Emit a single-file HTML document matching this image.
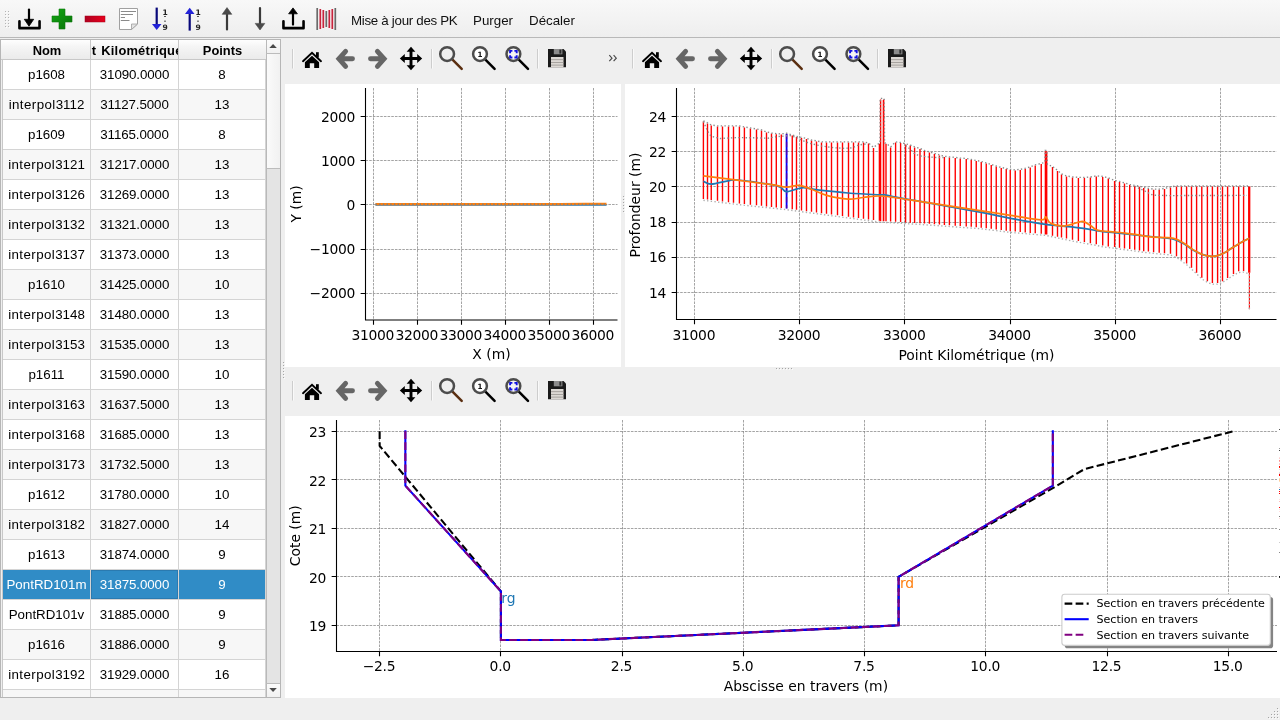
<!DOCTYPE html><html lang="fr"><head><meta charset="utf-8"><title>Profils</title><style>
html,body{margin:0;padding:0;}
body{width:1280px;height:720px;overflow:hidden;background:#efefef;position:relative;font-family:"Liberation Sans", sans-serif;font-size:13.33px;color:#000;}
.abs{position:absolute;}
#tbl,#toolbar,svg{will-change:transform;}
#toolbar{left:0;top:0;width:1280px;height:37px;background:linear-gradient(#f8f8f8,#eeeeee);border-bottom:1px solid #b8b8b8;}
#toolbar .lbl{position:absolute;top:1px;height:40px;line-height:40px;white-space:nowrap;font-size:13.33px;color:#111;}
#tbl{left:0;top:39px;width:281px;height:659px;background:#fff;border:1px solid #b6b6b6;box-sizing:border-box;overflow:hidden;}
#tbl .hdr{position:absolute;top:0;height:20px;line-height:21px;font-weight:bold;text-align:center;white-space:nowrap;overflow:hidden;background:linear-gradient(#fefefe,#f5f5f5 35%,#ebebeb);border-right:1px solid #c8c8c8;border-bottom:1px solid #c8c8c8;box-sizing:border-box;font-size:12.9px;}
#tbl .row{position:absolute;left:2px;width:264px;height:30px;}
#tbl .row.alt .c{background:#f7f7f7;}
#tbl .row.sel .c{background:#308cc6;color:#fff;}
#tbl .c{position:absolute;top:0;height:30px;line-height:29px;text-align:center;white-space:nowrap;box-sizing:border-box;border-right:1px solid #d4d4d4;border-bottom:1px solid #d4d4d4;background:#fff;font-size:13.33px;}
.mpltb{height:46px;}
.sep{position:absolute;width:1px;background:#c9c9c9;}
svg{display:block;}
svg text{font-family:"DejaVu Sans", "Liberation Sans", sans-serif;}
</style></head><body><div id="toolbar" class="abs"><svg class="abs" style="left:0;top:0" width="345" height="38" viewBox="0 0 345 38"><rect x="5.0" y="11.0" width="1" height="1" fill="#b4b4b4"/><rect x="6.0" y="12.0" width="1" height="1" fill="#fcfcfc"/><rect x="8.0" y="11.0" width="1" height="1" fill="#b4b4b4"/><rect x="9.0" y="12.0" width="1" height="1" fill="#fcfcfc"/><rect x="5.0" y="14.0" width="1" height="1" fill="#b4b4b4"/><rect x="6.0" y="15.0" width="1" height="1" fill="#fcfcfc"/><rect x="8.0" y="14.0" width="1" height="1" fill="#b4b4b4"/><rect x="9.0" y="15.0" width="1" height="1" fill="#fcfcfc"/><rect x="5.0" y="17.0" width="1" height="1" fill="#b4b4b4"/><rect x="6.0" y="18.0" width="1" height="1" fill="#fcfcfc"/><rect x="8.0" y="17.0" width="1" height="1" fill="#b4b4b4"/><rect x="9.0" y="18.0" width="1" height="1" fill="#fcfcfc"/><rect x="5.0" y="20.0" width="1" height="1" fill="#b4b4b4"/><rect x="6.0" y="21.0" width="1" height="1" fill="#fcfcfc"/><rect x="8.0" y="20.0" width="1" height="1" fill="#b4b4b4"/><rect x="9.0" y="21.0" width="1" height="1" fill="#fcfcfc"/><rect x="5.0" y="23.0" width="1" height="1" fill="#b4b4b4"/><rect x="6.0" y="24.0" width="1" height="1" fill="#fcfcfc"/><rect x="8.0" y="23.0" width="1" height="1" fill="#b4b4b4"/><rect x="9.0" y="24.0" width="1" height="1" fill="#fcfcfc"/><rect x="5.0" y="26.0" width="1" height="1" fill="#b4b4b4"/><rect x="6.0" y="27.0" width="1" height="1" fill="#fcfcfc"/><rect x="8.0" y="26.0" width="1" height="1" fill="#b4b4b4"/><rect x="9.0" y="27.0" width="1" height="1" fill="#fcfcfc"/><path d="M19.45 21.2 V28.15 H39.55 V21.2" fill="none" stroke="#000" stroke-width="2.6" stroke-linecap="round" stroke-linejoin="round"/><path d="M29 9.5 V21" fill="none" stroke="#000" stroke-width="2.2" stroke-linecap="round"/><path d="M24.3 19.3 H33.7 L29 26.2 Z" fill="#000" stroke="#000" stroke-width="0.8" stroke-linejoin="round"/><defs><linearGradient id="gg" x1="0" y1="0" x2="1" y2="1"><stop offset="0" stop-color="#12a812"/><stop offset="1" stop-color="#087008"/></linearGradient><linearGradient id="rg" x1="0" y1="0" x2="1" y2="0"><stop offset="0" stop-color="#b00020"/><stop offset="1" stop-color="#e8001c"/></linearGradient></defs><path d="M59 9 H65 V16 H72 V22 H65 V29 H59 V22 H52 V16 H59 Z" fill="url(#gg)" stroke="#0a7a0a" stroke-width="0.6"/><rect x="85" y="16" width="20" height="6" fill="url(#rg)" stroke="#a00018" stroke-width="0.5"/><path d="M119.5 8.5 H137.5 V24 L131.5 29.5 H119.5 Z" fill="#fff" stroke="#a0a0a0" stroke-width="1"/><path d="M137.5 24 H131.5 V29.5 Z" fill="#e4e4e4" stroke="#a0a0a0" stroke-width="0.8"/><path d="M120.8 11.5 H136" stroke="#8a8a8a" stroke-width="1"/><path d="M120.8 14.5 H133" stroke="#8a8a8a" stroke-width="1"/><path d="M120.8 17.5 H125" stroke="#8a8a8a" stroke-width="1"/><path d="M120.8 20.5 H129.5" stroke="#8a8a8a" stroke-width="1"/><path d="M156.7 7.6 V25" stroke="#08087a" stroke-width="2.2"/><path d="M152 24 H161.5 L156.7 30 Z" fill="#2222d8"/><text x="162.5" y="14.6" font-size="7.6" font-weight="bold" fill="#222" font-family="DejaVu Sans, sans-serif">1</text><rect x="164.1" y="16.0" width="1.8" height="0.9" fill="#333"/><rect x="164.1" y="20.7" width="1.8" height="0.9" fill="#333"/><text x="162.5" y="29.6" font-size="7.6" font-weight="bold" fill="#222" font-family="DejaVu Sans, sans-serif">9</text><path d="M189.7 13 V30.6" stroke="#08087a" stroke-width="2.2"/><path d="M185 14 H194.5 L189.7 7.8 Z" fill="#2222d8"/><text x="195.5" y="14.6" font-size="7.6" font-weight="bold" fill="#222" font-family="DejaVu Sans, sans-serif">1</text><rect x="197.1" y="16.0" width="1.8" height="0.9" fill="#333"/><rect x="197.1" y="20.7" width="1.8" height="0.9" fill="#333"/><text x="195.5" y="29.6" font-size="7.6" font-weight="bold" fill="#222" font-family="DejaVu Sans, sans-serif">9</text><path d="M227 13 V29.5" stroke="#3a3a3a" stroke-width="2.2" stroke-linecap="round"/><path d="M222.2 14.3 H231.8 L227 7.6 Z" fill="#4a4a4a" stroke="#4a4a4a" stroke-width="0.6" stroke-linejoin="round"/><path d="M260 8 V24" stroke="#3a3a3a" stroke-width="2.2" stroke-linecap="round"/><path d="M255.2 23.4 H264.8 L260 30 Z" fill="#4a4a4a" stroke="#4a4a4a" stroke-width="0.6" stroke-linejoin="round"/><path d="M283.45 21.2 V28.15 H303.55 V21.2" fill="none" stroke="#000" stroke-width="2.6" stroke-linecap="round" stroke-linejoin="round"/><path d="M293 13 V24.6" fill="none" stroke="#000" stroke-width="2.2" stroke-linecap="round"/><path d="M288.6 13.8 H297.4 L293 7.9 Z" fill="#000" stroke="#000" stroke-width="0.8" stroke-linejoin="round"/><path d="M317.2 8 V30" stroke="#6a6a6a" stroke-width="1.7"/><path d="M320.3 9 V29" stroke="#c8243c" stroke-width="1.7"/><path d="M323.3 10 V28" stroke="#c8243c" stroke-width="1.7"/><path d="M326.3 11 V27" stroke="#6a6a6a" stroke-width="1.7"/><path d="M329.3 10 V28" stroke="#c8243c" stroke-width="1.7"/><path d="M332.3 9 V29" stroke="#c8243c" stroke-width="1.7"/><path d="M335.3 8 V30" stroke="#6a6a6a" stroke-width="1.7"/></svg><div class="lbl" style="left:351px;letter-spacing:-0.3px">Mise à jour des PK</div><div class="lbl" style="left:473px">Purger</div><div class="lbl" style="left:529px">Décaler</div></div><div id="tbl" class="abs"><div class="hdr" style="left:0;width:90px;padding-left:3px">Nom</div><div class="hdr" style="left:90px;width:88px;"><span style="position:absolute;left:-27.9px;top:0;letter-spacing:0.2px;word-spacing:1.2px">Point Kilométrique</span></div><div class="hdr" style="left:178px;width:87px;border-right:none">Points</div><div class="row" style="top:20px"><div class="c" style="left:0;width:88px">p1608</div><div class="c" style="left:88px;width:88px;letter-spacing:-0.1px">31090.0000</div><div class="c" style="left:176px;width:87px">8</div></div><div class="row alt" style="top:50px"><div class="c" style="left:0;width:88px"><span style="letter-spacing:0.42px">interpol</span>3112</div><div class="c" style="left:88px;width:88px;letter-spacing:-0.1px">31127.5000</div><div class="c" style="left:176px;width:87px">13</div></div><div class="row" style="top:80px"><div class="c" style="left:0;width:88px">p1609</div><div class="c" style="left:88px;width:88px;letter-spacing:-0.1px">31165.0000</div><div class="c" style="left:176px;width:87px">8</div></div><div class="row alt" style="top:110px"><div class="c" style="left:0;width:88px"><span style="letter-spacing:0.42px">interpol</span>3121</div><div class="c" style="left:88px;width:88px;letter-spacing:-0.1px">31217.0000</div><div class="c" style="left:176px;width:87px">13</div></div><div class="row" style="top:140px"><div class="c" style="left:0;width:88px"><span style="letter-spacing:0.42px">interpol</span>3126</div><div class="c" style="left:88px;width:88px;letter-spacing:-0.1px">31269.0000</div><div class="c" style="left:176px;width:87px">13</div></div><div class="row alt" style="top:170px"><div class="c" style="left:0;width:88px"><span style="letter-spacing:0.42px">interpol</span>3132</div><div class="c" style="left:88px;width:88px;letter-spacing:-0.1px">31321.0000</div><div class="c" style="left:176px;width:87px">13</div></div><div class="row" style="top:200px"><div class="c" style="left:0;width:88px"><span style="letter-spacing:0.42px">interpol</span>3137</div><div class="c" style="left:88px;width:88px;letter-spacing:-0.1px">31373.0000</div><div class="c" style="left:176px;width:87px">13</div></div><div class="row alt" style="top:230px"><div class="c" style="left:0;width:88px">p1610</div><div class="c" style="left:88px;width:88px;letter-spacing:-0.1px">31425.0000</div><div class="c" style="left:176px;width:87px">10</div></div><div class="row" style="top:260px"><div class="c" style="left:0;width:88px"><span style="letter-spacing:0.42px">interpol</span>3148</div><div class="c" style="left:88px;width:88px;letter-spacing:-0.1px">31480.0000</div><div class="c" style="left:176px;width:87px">13</div></div><div class="row alt" style="top:290px"><div class="c" style="left:0;width:88px"><span style="letter-spacing:0.42px">interpol</span>3153</div><div class="c" style="left:88px;width:88px;letter-spacing:-0.1px">31535.0000</div><div class="c" style="left:176px;width:87px">13</div></div><div class="row" style="top:320px"><div class="c" style="left:0;width:88px">p1611</div><div class="c" style="left:88px;width:88px;letter-spacing:-0.1px">31590.0000</div><div class="c" style="left:176px;width:87px">10</div></div><div class="row alt" style="top:350px"><div class="c" style="left:0;width:88px"><span style="letter-spacing:0.42px">interpol</span>3163</div><div class="c" style="left:88px;width:88px;letter-spacing:-0.1px">31637.5000</div><div class="c" style="left:176px;width:87px">13</div></div><div class="row" style="top:380px"><div class="c" style="left:0;width:88px"><span style="letter-spacing:0.42px">interpol</span>3168</div><div class="c" style="left:88px;width:88px;letter-spacing:-0.1px">31685.0000</div><div class="c" style="left:176px;width:87px">13</div></div><div class="row alt" style="top:410px"><div class="c" style="left:0;width:88px"><span style="letter-spacing:0.42px">interpol</span>3173</div><div class="c" style="left:88px;width:88px;letter-spacing:-0.1px">31732.5000</div><div class="c" style="left:176px;width:87px">13</div></div><div class="row" style="top:440px"><div class="c" style="left:0;width:88px">p1612</div><div class="c" style="left:88px;width:88px;letter-spacing:-0.1px">31780.0000</div><div class="c" style="left:176px;width:87px">10</div></div><div class="row alt" style="top:470px"><div class="c" style="left:0;width:88px"><span style="letter-spacing:0.42px">interpol</span>3182</div><div class="c" style="left:88px;width:88px;letter-spacing:-0.1px">31827.0000</div><div class="c" style="left:176px;width:87px">14</div></div><div class="row" style="top:500px"><div class="c" style="left:0;width:88px">p1613</div><div class="c" style="left:88px;width:88px;letter-spacing:-0.1px">31874.0000</div><div class="c" style="left:176px;width:87px">9</div></div><div class="row alt sel" style="top:530px"><div class="c" style="left:0;width:88px">PontRD101m</div><div class="c" style="left:88px;width:88px;letter-spacing:-0.1px"><span style="position:absolute;left:0;top:0;width:87px;height:29px;box-sizing:border-box;border:1px solid #2a7ab0"></span>31875.0000</div><div class="c" style="left:176px;width:87px">9</div></div><div class="row" style="top:560px"><div class="c" style="left:0;width:88px">PontRD101v</div><div class="c" style="left:88px;width:88px;letter-spacing:-0.1px">31885.0000</div><div class="c" style="left:176px;width:87px">9</div></div><div class="row alt" style="top:590px"><div class="c" style="left:0;width:88px">p1616</div><div class="c" style="left:88px;width:88px;letter-spacing:-0.1px">31886.0000</div><div class="c" style="left:176px;width:87px">9</div></div><div class="row" style="top:620px"><div class="c" style="left:0;width:88px"><span style="letter-spacing:0.42px">interpol</span>3192</div><div class="c" style="left:88px;width:88px;letter-spacing:-0.1px">31929.0000</div><div class="c" style="left:176px;width:87px">16</div></div><div class="row alt" style="top:650px"><div class="c" style="left:0;width:88px"></div><div class="c" style="left:88px;width:88px;letter-spacing:-0.1px"></div><div class="c" style="left:176px;width:87px"></div></div><div class="abs" style="left:0;top:20px;width:2px;height:640px;background:#efefef;border-right:1px solid #c8c8c8;box-sizing:border-box"></div><div class="abs" style="left:265px;top:0;width:14px;height:657px;background:#e4e4e4;border-left:1px solid #b9b9b9;box-sizing:border-box"></div><div class="abs" style="left:265px;top:0;width:14px;height:14px;background:linear-gradient(#fbfbfb,#f1f1f1);border-left:1px solid #b9b9b9;border-bottom:1px solid #bcbcbc;box-sizing:border-box"></div><svg class="abs" style="left:265px;top:0" width="14" height="14"><path d="M3.3 8.0 H10.8 L7.05 4.1 Z" fill="#4a4a4a"/></svg><div class="abs" style="left:265px;top:14px;width:14px;height:115px;background:linear-gradient(90deg,#fafafa,#f1f1f1);border-left:1px solid #b9b9b9;border-bottom:1px solid #bcbcbc;box-sizing:border-box"></div><div class="abs" style="left:265px;top:643px;width:14px;height:14px;background:linear-gradient(#fbfbfb,#f1f1f1);border-left:1px solid #b9b9b9;border-top:1px solid #bcbcbc;box-sizing:border-box"></div><svg class="abs" style="left:265px;top:643px" width="14" height="14"><path d="M3.3 5.1 H10.8 L7.05 9.0 Z" fill="#4a4a4a"/></svg></div><svg class="abs" style="left:284px;top:38px" width="340" height="46" viewBox="0 0 340 46"><rect x="8.0" y="11" width="1" height="19.5" fill="#cdcdcd"/><rect x="9.0" y="11" width="1" height="19.5" fill="#f9f9f9"/><rect x="147.0" y="11" width="1" height="19.5" fill="#cdcdcd"/><rect x="148.0" y="11" width="1" height="19.5" fill="#f9f9f9"/><rect x="253.0" y="11" width="1" height="19.5" fill="#cdcdcd"/><rect x="254.0" y="11" width="1" height="19.5" fill="#f9f9f9"/><path d="M19 23.2 L28 14.8 L37 23.2" fill="none" stroke="#000" stroke-width="1.9" stroke-linecap="round" stroke-linejoin="miter"/><rect x="32" y="14.2" width="2.8" height="5.4" fill="#000"/><path d="M20.9 24.2 L28 17.8 L35.1 24.2 V30 H30.2 V25.2 H25.8 V30 H20.9 Z" fill="#000"/><path d="M61.6 13.4 L54.9 20.8 L61.6 28.3 M56 20.8 H68.5" fill="none" stroke="#666" stroke-width="4.9" stroke-linecap="round" stroke-linejoin="miter"/><path d="M93.4 13.4 L100.1 20.8 L93.4 28.3 M99 20.8 H86.5" fill="none" stroke="#666" stroke-width="4.9" stroke-linecap="round" stroke-linejoin="miter"/><path d="M119 20.5 H135 M127 12 V29" stroke="#000" stroke-width="2.9" fill="none"/><path d="M115.8 20.5 L120.8 16.1 V24.9 Z M138.2 20.5 L133.2 16.1 V24.9 Z M127 8.8 L122.6 13.8 H131.4 Z M127 32.2 L122.6 27.2 H131.4 Z" fill="#000"/><path d="M168.5 21.6 L177.7 30.8" stroke="#5a2e10" stroke-width="2.5" stroke-linecap="round"/><circle cx="163.1" cy="16.1" r="6.9" fill="none" stroke="#4c4c4c" stroke-width="2.5"/><path d="M201.4 21.6 L210.6 30.8" stroke="#000" stroke-width="2.5" stroke-linecap="round"/><circle cx="196.0" cy="16.1" r="6.9" fill="#ffffff" stroke="#4c4c4c" stroke-width="2.5"/><text x="196.0" y="18.7" font-size="7.2" font-weight="bold" text-anchor="middle" fill="#111">1</text><path d="M234.8 21.6 L244.0 30.8" stroke="#000" stroke-width="2.5" stroke-linecap="round"/><circle cx="229.4" cy="16.1" r="6.9" fill="#f4f4f4" stroke="#4c4c4c" stroke-width="2.5"/><path d="M226.1 15.2 V12.9 H228.4 M230.4 12.9 H232.70000000000002 V15.2 M232.70000000000002 17.2 V19.5 H230.4 M228.4 19.5 H226.1 V17.2" fill="none" stroke="#1010e0" stroke-width="1.9"/><path d="M264 11 H279.5 L282 13.5 V29.3 H264 Z" fill="#1a1a1a"/><rect x="269.8" y="11" width="8.6" height="5.3" fill="#8c8c8c"/><rect x="275.4" y="11.6" width="1.9" height="4" fill="#2a2a2a"/><rect x="267" y="19" width="12.5" height="10.3" fill="#dcd8d4"/><rect x="267" y="21.3" width="12.5" height="0.8" fill="#9a9692"/><rect x="267" y="24" width="12.5" height="0.8" fill="#9a9692"/><rect x="267" y="26.7" width="12.5" height="0.8" fill="#9a9692"/><path d="M325.3 17.2 L328 20.2 L325.3 23.2 M329.6 17.2 L332.3 20.2 L329.6 23.2" fill="none" stroke="#484848" stroke-width="1.15"/></svg><svg class="abs" style="left:624px;top:38px" width="340" height="46" viewBox="0 0 340 46"><rect x="8.0" y="11" width="1" height="19.5" fill="#cdcdcd"/><rect x="9.0" y="11" width="1" height="19.5" fill="#f9f9f9"/><rect x="147.0" y="11" width="1" height="19.5" fill="#cdcdcd"/><rect x="148.0" y="11" width="1" height="19.5" fill="#f9f9f9"/><rect x="253.0" y="11" width="1" height="19.5" fill="#cdcdcd"/><rect x="254.0" y="11" width="1" height="19.5" fill="#f9f9f9"/><path d="M19 23.2 L28 14.8 L37 23.2" fill="none" stroke="#000" stroke-width="1.9" stroke-linecap="round" stroke-linejoin="miter"/><rect x="32" y="14.2" width="2.8" height="5.4" fill="#000"/><path d="M20.9 24.2 L28 17.8 L35.1 24.2 V30 H30.2 V25.2 H25.8 V30 H20.9 Z" fill="#000"/><path d="M61.6 13.4 L54.9 20.8 L61.6 28.3 M56 20.8 H68.5" fill="none" stroke="#666" stroke-width="4.9" stroke-linecap="round" stroke-linejoin="miter"/><path d="M93.4 13.4 L100.1 20.8 L93.4 28.3 M99 20.8 H86.5" fill="none" stroke="#666" stroke-width="4.9" stroke-linecap="round" stroke-linejoin="miter"/><path d="M119 20.5 H135 M127 12 V29" stroke="#000" stroke-width="2.9" fill="none"/><path d="M115.8 20.5 L120.8 16.1 V24.9 Z M138.2 20.5 L133.2 16.1 V24.9 Z M127 8.8 L122.6 13.8 H131.4 Z M127 32.2 L122.6 27.2 H131.4 Z" fill="#000"/><path d="M168.5 21.6 L177.7 30.8" stroke="#5a2e10" stroke-width="2.5" stroke-linecap="round"/><circle cx="163.1" cy="16.1" r="6.9" fill="none" stroke="#4c4c4c" stroke-width="2.5"/><path d="M201.4 21.6 L210.6 30.8" stroke="#000" stroke-width="2.5" stroke-linecap="round"/><circle cx="196.0" cy="16.1" r="6.9" fill="#ffffff" stroke="#4c4c4c" stroke-width="2.5"/><text x="196.0" y="18.7" font-size="7.2" font-weight="bold" text-anchor="middle" fill="#111">1</text><path d="M234.8 21.6 L244.0 30.8" stroke="#000" stroke-width="2.5" stroke-linecap="round"/><circle cx="229.4" cy="16.1" r="6.9" fill="#f4f4f4" stroke="#4c4c4c" stroke-width="2.5"/><path d="M226.1 15.2 V12.9 H228.4 M230.4 12.9 H232.70000000000002 V15.2 M232.70000000000002 17.2 V19.5 H230.4 M228.4 19.5 H226.1 V17.2" fill="none" stroke="#1010e0" stroke-width="1.9"/><path d="M264 11 H279.5 L282 13.5 V29.3 H264 Z" fill="#1a1a1a"/><rect x="269.8" y="11" width="8.6" height="5.3" fill="#8c8c8c"/><rect x="275.4" y="11.6" width="1.9" height="4" fill="#2a2a2a"/><rect x="267" y="19" width="12.5" height="10.3" fill="#dcd8d4"/><rect x="267" y="21.3" width="12.5" height="0.8" fill="#9a9692"/><rect x="267" y="24" width="12.5" height="0.8" fill="#9a9692"/><rect x="267" y="26.7" width="12.5" height="0.8" fill="#9a9692"/></svg><svg class="abs" style="left:284px;top:369.5px" width="340" height="46" viewBox="0 0 340 46"><rect x="8.0" y="11" width="1" height="19.5" fill="#cdcdcd"/><rect x="9.0" y="11" width="1" height="19.5" fill="#f9f9f9"/><rect x="147.0" y="11" width="1" height="19.5" fill="#cdcdcd"/><rect x="148.0" y="11" width="1" height="19.5" fill="#f9f9f9"/><rect x="253.0" y="11" width="1" height="19.5" fill="#cdcdcd"/><rect x="254.0" y="11" width="1" height="19.5" fill="#f9f9f9"/><path d="M19 23.2 L28 14.8 L37 23.2" fill="none" stroke="#000" stroke-width="1.9" stroke-linecap="round" stroke-linejoin="miter"/><rect x="32" y="14.2" width="2.8" height="5.4" fill="#000"/><path d="M20.9 24.2 L28 17.8 L35.1 24.2 V30 H30.2 V25.2 H25.8 V30 H20.9 Z" fill="#000"/><path d="M61.6 13.4 L54.9 20.8 L61.6 28.3 M56 20.8 H68.5" fill="none" stroke="#666" stroke-width="4.9" stroke-linecap="round" stroke-linejoin="miter"/><path d="M93.4 13.4 L100.1 20.8 L93.4 28.3 M99 20.8 H86.5" fill="none" stroke="#666" stroke-width="4.9" stroke-linecap="round" stroke-linejoin="miter"/><path d="M119 20.5 H135 M127 12 V29" stroke="#000" stroke-width="2.9" fill="none"/><path d="M115.8 20.5 L120.8 16.1 V24.9 Z M138.2 20.5 L133.2 16.1 V24.9 Z M127 8.8 L122.6 13.8 H131.4 Z M127 32.2 L122.6 27.2 H131.4 Z" fill="#000"/><path d="M168.5 21.6 L177.7 30.8" stroke="#5a2e10" stroke-width="2.5" stroke-linecap="round"/><circle cx="163.1" cy="16.1" r="6.9" fill="none" stroke="#4c4c4c" stroke-width="2.5"/><path d="M201.4 21.6 L210.6 30.8" stroke="#000" stroke-width="2.5" stroke-linecap="round"/><circle cx="196.0" cy="16.1" r="6.9" fill="#ffffff" stroke="#4c4c4c" stroke-width="2.5"/><text x="196.0" y="18.7" font-size="7.2" font-weight="bold" text-anchor="middle" fill="#111">1</text><path d="M234.8 21.6 L244.0 30.8" stroke="#000" stroke-width="2.5" stroke-linecap="round"/><circle cx="229.4" cy="16.1" r="6.9" fill="#f4f4f4" stroke="#4c4c4c" stroke-width="2.5"/><path d="M226.1 15.2 V12.9 H228.4 M230.4 12.9 H232.70000000000002 V15.2 M232.70000000000002 17.2 V19.5 H230.4 M228.4 19.5 H226.1 V17.2" fill="none" stroke="#1010e0" stroke-width="1.9"/><path d="M264 11 H279.5 L282 13.5 V29.3 H264 Z" fill="#1a1a1a"/><rect x="269.8" y="11" width="8.6" height="5.3" fill="#8c8c8c"/><rect x="275.4" y="11.6" width="1.9" height="4" fill="#2a2a2a"/><rect x="267" y="19" width="12.5" height="10.3" fill="#dcd8d4"/><rect x="267" y="21.3" width="12.5" height="0.8" fill="#9a9692"/><rect x="267" y="24" width="12.5" height="0.8" fill="#9a9692"/><rect x="267" y="26.7" width="12.5" height="0.8" fill="#9a9692"/></svg><svg class="abs" style="left:285px;top:84px;background:#fff" width="336" height="283" viewBox="285 84 336 283"><path d="M373.5 88 V320 M417.5 88 V320 M461.5 88 V320 M505.5 88 V320 M549.5 88 V320 M593.5 88 V320 M365.5 116.5 H617.5 M365.5 160.5 H617.5 M365.5 204.5 H617.5 M365.5 249.5 H617.5 M365.5 293.5 H617.5 " stroke="#808080" stroke-width="0.72" stroke-dasharray="2.57 1.11" fill="none"/><path d="M375.5 204.9 H606.5" stroke="#1f77b4" stroke-width="1.7" fill="none"/><path d="M375.5 204.8 H606.5" stroke="#8a8a8a" stroke-width="0.9" fill="none"/><path d="M375.5 204.1 L560 204.1 L585 203.8 L606.5 203.8" stroke="#ff7f0e" stroke-width="2.08" fill="none"/><path d="M375.5 204.2 H606.5" stroke="#808080" stroke-width="1.39" stroke-dasharray="1.39 2.29" fill="none"/><path d="M365.5 88 V320 M364.95 320 H617.5 M373.5 320 v4.86 M417.5 320 v4.86 M461.5 320 v4.86 M505.5 320 v4.86 M549.5 320 v4.86 M593.5 320 v4.86 M365.5 116.5 h-4.86 M365.5 160.5 h-4.86 M365.5 204.5 h-4.86 M365.5 249.5 h-4.86 M365.5 293.5 h-4.86 " stroke="#000" stroke-width="1.1" fill="none"/><text x="372.7" y="339.6" font-size="13.89" text-anchor="middle" letter-spacing="-0.3">31000</text><text x="416.7" y="339.6" font-size="13.89" text-anchor="middle" letter-spacing="-0.3">32000</text><text x="460.7" y="339.6" font-size="13.89" text-anchor="middle" letter-spacing="-0.3">33000</text><text x="504.7" y="339.6" font-size="13.89" text-anchor="middle" letter-spacing="-0.3">34000</text><text x="548.7" y="339.6" font-size="13.89" text-anchor="middle" letter-spacing="-0.3">35000</text><text x="592.7" y="339.6" font-size="13.89" text-anchor="middle" letter-spacing="-0.3">36000</text><text x="355" y="121.6" font-size="13.89" text-anchor="end" letter-spacing="-0.3">2000</text><text x="355" y="165.5" font-size="13.89" text-anchor="end" letter-spacing="-0.3">1000</text><text x="355" y="209.5" font-size="13.89" text-anchor="end" letter-spacing="-0.3">0</text><text x="355" y="254.2" font-size="13.89" text-anchor="end" letter-spacing="-0.3">−1000</text><text x="355" y="298.3" font-size="13.89" text-anchor="end" letter-spacing="-0.3">−2000</text><text x="491.5" y="358.8" font-size="13.89" text-anchor="middle">X (m)</text><text transform="translate(300.5 204) rotate(-90)" font-size="13.89" text-anchor="middle">Y (m)</text></svg><svg class="abs" style="left:625px;top:84px;background:#fff" width="655" height="283" viewBox="625 84 655 283"><path d="M694.5 88 V319.5 M799.5 88 V319.5 M904.5 88 V319.5 M1010.5 88 V319.5 M1115.5 88 V319.5 M1220.5 88 V319.5 M676.5 116.5 H1276.5 M676.5 151.5 H1276.5 M676.5 186.5 H1276.5 M676.5 222.5 H1276.5 M676.5 257.5 H1276.5 M676.5 292.5 H1276.5 " stroke="#808080" stroke-width="0.72" stroke-dasharray="2.57 1.11" fill="none"/><path d="M703.4 121.5 V199.1 M707.5 123.4 V199.6 M711.25 125.6 V200.06 M717.5 126.5 V200.82 M722.5 126.5 V201.44 M728.5 126.5 V202.17 M733.5 126.5 V202.78 M739.4 126.5 V203.5 M744.4 127.5 V204.06 M750.4 128.5 V204.69 M756.5 129.6 V205.33 M761.5 130.5 V205.86 M766.5 132.5 V206.38 M771.5 133.6 V206.91 M776.3 134.2 V207.42 M781.3 134.5 V207.94 M792.25 135.6 V209.26 M796.5 137 V209.83 M801.5 138 V210.5 M806.5 139 V211.17 M811.5 140.6 V211.84 M816.5 141.5 V212.51 M821.5 142.5 V213.18 M826.5 142.5 V213.85 M831.5 142.5 V214.53 M837.5 142.5 V215.33 M842.5 142.5 V215.99 M848.5 142.5 V216.79 M853.5 142.5 V217.46 M858.5 142.5 V218.12 M863.5 142.5 V218.79 M868.5 143.5 V219.45 M873.5 148 V220.12 M879.4 143.75 V220.85 M886 143.75 V221.24 M890.6 147.5 V221.51 M895.6 142.5 V221.8 M900.6 143.1 V222.1 M905.6 144.4 V222.39 M910.25 145.6 V222.67 M914.6 147.5 V222.92 M920 149 V223.24 M924.4 151 V223.5 M929.4 152.5 V223.86 M934.4 154 V224.22 M939.4 155.5 V224.58 M944.4 156.9 V224.94 M949.4 157.5 V225.3 M955.25 158.03 V225.72 M960.25 158.71 V226.08 M966.25 159.05 V226.51 M971.25 160.05 V226.87 M976.25 161.05 V227.23 M981.25 162.07 V227.65 M986.25 163.57 V228.26 M991.25 165.07 V228.86 M996.25 166.57 V229.46 M1001.25 168.05 V230.07 M1006.25 169.06 V230.67 M1010.25 170.03 V231.16 M1015.25 170.47 V231.6 M1020.25 169.95 V232.02 M1025.25 168.93 V232.45 M1030.25 167.4 V232.88 M1035.25 165.44 V233.31 M1041.25 164 V233.82 M1052.5 167 V235.64 M1057.5 171 V236.7 M1061.5 174.5 V237.54 M1066.5 176.5 V238.6 M1072.5 177.5 V239.85 M1078.4 178 V240.95 M1084.4 178 V242.08 M1090.4 177.6 V243.2 M1096.3 176.5 V244.2 M1102.7 177 V245.6 M1108.3 178.5 V246.4 M1114.6 181 V247 M1119.5 182 V247.8 M1124.5 183.5 V248.5 M1129.7 185 V249.1 M1134.7 186 V249.8 M1139.5 186.7 V250.5 M1143.7 188 V251.2 M1148.4 189 V251.6 M1153.6 189.7 V252.2 M1159.2 189.7 V252.8 M1164.5 189 V253.2 M1170.5 187.5 V253.8 M1176.5 186.5 V256.3 M1181.4 186.5 V259.7 M1186.6 186.5 V263.6 M1191.5 186.5 V267.8 M1196.6 186.5 V272.7 M1201.8 186.5 V277.7 M1207.4 186.5 V281.2 M1212.4 186.5 V283 M1217.6 186.5 V282.9 M1222.5 186.5 V281.2 M1227.6 186.5 V277.9 M1233.5 186.5 V274.1 M1238.7 186.5 V271.3 M1243.6 186.5 V270.9 M880.6 99.4 V221.2 M883.7 99.4 V221.2 M1045.4 151.3 V234.4 M1046.7 151.3 V234.4 " stroke="#ff0000" stroke-width="1.39" fill="none"/><path d="M882.15 100 V221" stroke="#ffb4b4" stroke-width="1.6" fill="none"/><path d="M1249.2 186.5 V272.7" stroke="#ff0000" stroke-width="2.3" fill="none"/><path d="M1249.4 272.7 V309.3" stroke="#ff0000" stroke-width="1.1" fill="none"/><path d="M786.6 133.8 V208.5" stroke="#0000ff" stroke-width="1.8" fill="none"/><path d="M786.6 133.8 V208.5" stroke="#800080" stroke-width="1.5" stroke-dasharray="5.5 2.4" fill="none" opacity="0.55"/><path d="M703.4 120.9 L707.5 122.8 L711.25 125 L717.5 125.9 L739.4 125.9 L744.4 126.9 L750.4 127.9 L756.5 129 L761.5 129.9 L766.5 131.9 L771.5 133 L776.3 133.6 L781.3 133.9 L786.6 133.2 L792.25 135 L796.5 136.4 L801.5 137.4 L806.5 138.4 L811.5 140 L816.5 140.9 L821.5 141.9 L863.5 141.9 L868.5 142.9 L873.5 147.4 L879.4 143.15 L880 142.9 L880.2 98.4 L884.2 98.4 L884.6 142.9 L886 143.15 L890.6 146.9 L895.6 141.9 L900.6 142.5 L905.6 143.8 L910.25 145 L914.6 146.9 L920 148.4 L924.4 150.4 L929.4 151.9 L934.4 153.4 L939.4 154.9 L944.4 156.3 L949.4 156.9 L955 157.4 L960 158.1 L966 158.4 L971 159.4 L976 160.4 L981 161.4 L986 162.9 L991 164.4 L996 165.9 L1001 167.4 L1006 168.4 L1010 169.4 L1015 169.9 L1020 169.4 L1025 168.4 L1030 166.9 L1035 164.9 L1041.25 163.4 L1044.8 162.4 L1045.2 150.4 L1046.9 150.4 L1047.4 164.4 L1052.5 166.4 L1057.5 170.4 L1061.5 173.9 L1066.5 175.9 L1072.5 176.9 L1078.4 177.4 L1084.4 177.4 L1090.4 177 L1096.3 175.9 L1102.7 176.4 L1108.3 177.9 L1114.6 180.4 L1119.5 181.4 L1124.5 182.9 L1129.7 184.4 L1134.7 185.4 L1139.5 186.1 L1143.7 187.4 L1148.4 188.4 L1153.6 189.1 L1159.2 189.1 L1164.5 188.4 L1170.5 186.9 L1176.5 185.9 L1249.2 185.9" stroke="#8c8c8c" stroke-width="1.39" stroke-dasharray="1.39 2.29" fill="none"/><path d="M703.4 121.5 L707 130 L711 136.2 L720 138.5 L737 137.6 L753 137.8 L768 138.2 L778 136.5 L790 135.6 L796.5 137.5 L801.5 140 L808.75 143.1 L821 145.9 L833.75 147.75 L845 148.4 L852.5 147.75 L858.75 145 L867.5 143.75" stroke="#8c8c8c" stroke-width="1.39" stroke-dasharray="1.39 2.29" fill="none"/><path d="M1134.7 186.2 L1143.7 190.5 L1153 195.2 L1170 195.6 L1247 195.4" stroke="#8c8c8c" stroke-width="1.39" stroke-dasharray="1.39 2.29" fill="none"/><path d="M905.6 145.5 L910 149 L913.75 153.1 L917.5 155 L921 156 L927.5 156.9 L936 157.5 L944.4 157.5" stroke="#8c8c8c" stroke-width="1.39" stroke-dasharray="1.39 2.29" fill="none"/><path d="M703.4 200.3 L741 204.9 L786.6 209.7 L832.8 215.9 L878.6 222 L924.4 224.7 L980 228.7 L1010.6 232.4 L1045.7 235.4 L1071.7 240.9 L1090.4 244.4 L1096.3 245.4 L1102.7 246.8 L1108.3 247.6 L1114.6 248.2 L1119.5 249 L1124.5 249.7 L1129.7 250.3 L1134.7 251 L1139.5 251.7 L1143.7 252.4 L1148.4 252.8 L1153.6 253.4 L1159.2 254 L1164.5 254.4 L1170.5 255 L1176.5 257.5 L1181.4 260.9 L1186.6 264.8 L1191.5 269 L1196.6 273.9 L1201.8 278.9 L1207.4 282.4 L1212.4 284.2 L1217.6 284.1 L1222.5 282.4 L1227.6 279.1 L1233.5 275.3 L1238.7 272.5 L1243.6 272.1 L1249.2 273.9 L1249.4 309.5" stroke="#b0b0b0" stroke-width="1.39" stroke-dasharray="1.39 2.29" fill="none"/><path d="M703.4 181.2 C704.72 181.7 707.2 184.27 711.3 184.2 C715.4 184.13 723.72 181.5 728 180.8 C732.28 180.1 729.72 179.35 737 180 C744.28 180.65 764.37 183.45 771.7 184.7 C779.03 185.95 778.52 186.33 781 187.5 C783.48 188.67 783.07 191.65 786.6 191.7 C790.13 191.75 797.05 188.1 802.2 187.8 C807.35 187.5 809.87 189.03 817.5 189.9 C825.13 190.77 837.82 192.18 848 193 C858.18 193.82 872.48 194.5 878.6 194.8 C884.72 195.1 882.13 194.45 884.7 194.8 C887.27 195.15 887.38 195.68 894 196.9 C900.62 198.12 910.07 199.55 924.4 202.1 C938.73 204.65 965.63 209.5 980 212.2 C994.37 214.9 999.65 216.27 1010.6 218.3 C1021.55 220.33 1035.52 222.97 1045.7 224.4 C1055.88 225.83 1064.25 226.05 1071.7 226.9 C1079.15 227.75 1085.23 228.72 1090.4 229.5 C1095.57 230.28 1098.67 231.08 1102.7 231.6 C1106.73 232.12 1109.27 232.07 1114.6 232.6 C1119.93 233.13 1126.38 233.9 1134.7 234.8 C1143.02 235.7 1158.53 237.38 1164.5 238 C1170.47 238.62 1168.5 238.13 1170.5 238.5 C1172.5 238.87 1174.68 239.52 1176.5 240.2 C1178.32 240.88 1179.72 241.7 1181.4 242.6 C1183.08 243.5 1184.92 244.53 1186.6 245.6 C1188.28 246.67 1189.83 247.95 1191.5 249 C1193.17 250.05 1194.88 251 1196.6 251.9 C1198.32 252.8 1200 253.73 1201.8 254.4 C1203.6 255.07 1205.63 255.58 1207.4 255.9 C1209.17 256.22 1210.7 256.35 1212.4 256.3 C1214.1 256.25 1215.92 256.02 1217.6 255.6 C1219.28 255.18 1220.83 254.58 1222.5 253.8 C1224.17 253.02 1225.77 252.03 1227.6 250.9 C1229.43 249.77 1231.65 248.17 1233.5 247 C1235.35 245.83 1237.02 244.88 1238.7 243.9 C1240.38 242.92 1241.85 242.03 1243.6 241.1 C1245.35 240.17 1248.27 238.77 1249.2 238.3" stroke="#1f77b4" stroke-width="1.7" fill="none" stroke-linejoin="round"/><path d="M703.4 175.8 C709.67 176.62 729.62 179.22 741 180.7 C752.38 182.18 764.1 183.62 771.7 184.7 C779.3 185.78 782.05 187.1 786.6 187.2 C791.15 187.3 794.87 184.95 799 185.3 C803.13 185.65 806.78 187.62 811.4 189.3 C816.02 190.98 820.6 193.77 826.7 195.4 C832.8 197.03 841.9 198.75 848 199.1 C854.1 199.45 858.2 198.02 863.3 197.5 C868.4 196.98 873.48 196 878.6 196 C883.72 196 886.37 196.48 894 197.5 C901.63 198.52 910.07 199.9 924.4 202.1 C938.73 204.3 965.63 208.5 980 210.7 C994.37 212.9 1000.43 213.77 1010.6 215.3 C1020.77 216.83 1035.15 219.65 1041 219.9 C1046.85 220.15 1044.15 216.3 1045.7 216.8 C1047.25 217.3 1047.5 221.37 1050.3 222.9 C1053.1 224.43 1058.93 225.75 1062.5 226 C1066.07 226.25 1068.38 225.17 1071.7 224.4 C1075.02 223.63 1079.28 221.2 1082.4 221.4 C1085.52 221.6 1088.08 224.2 1090.4 225.6 C1092.72 227 1094.25 228.9 1096.3 229.8 C1098.35 230.7 1099.65 230.63 1102.7 231 C1105.75 231.37 1110.97 231.67 1114.6 232 C1118.23 232.33 1121.15 232.62 1124.5 233 C1127.85 233.38 1130.72 233.7 1134.7 234.3 C1138.68 234.9 1143.43 236.05 1148.4 236.6 C1153.37 237.15 1160.82 237.38 1164.5 237.6 C1168.18 237.82 1168.5 237.6 1170.5 237.9 C1172.5 238.2 1174.68 238.75 1176.5 239.4 C1178.32 240.05 1179.72 240.87 1181.4 241.8 C1183.08 242.73 1184.92 243.87 1186.6 245 C1188.28 246.13 1189.83 247.5 1191.5 248.6 C1193.17 249.7 1194.88 250.67 1196.6 251.6 C1198.32 252.53 1200 253.48 1201.8 254.2 C1203.6 254.92 1205.63 255.55 1207.4 255.9 C1209.17 256.25 1210.7 256.35 1212.4 256.3 C1214.1 256.25 1215.92 256.02 1217.6 255.6 C1219.28 255.18 1220.83 254.58 1222.5 253.8 C1224.17 253.02 1225.77 252.03 1227.6 250.9 C1229.43 249.77 1231.65 248.17 1233.5 247 C1235.35 245.83 1237.02 244.88 1238.7 243.9 C1240.38 242.92 1241.85 242.03 1243.6 241.1 C1245.35 240.17 1248.27 238.77 1249.2 238.3" stroke="#ff7f0e" stroke-width="1.7" fill="none" stroke-linejoin="round"/><path d="M676.5 88 V319.5 M675.95 319.5 H1276.5 M694.5 319.5 v4.86 M799.5 319.5 v4.86 M904.5 319.5 v4.86 M1010.5 319.5 v4.86 M1115.5 319.5 v4.86 M1220.5 319.5 v4.86 M676.5 116.5 h-4.86 M676.5 151.5 h-4.86 M676.5 186.5 h-4.86 M676.5 222.5 h-4.86 M676.5 257.5 h-4.86 M676.5 292.5 h-4.86 " stroke="#000" stroke-width="1.1" fill="none"/><text x="693.85" y="339.6" font-size="13.89" text-anchor="middle" letter-spacing="-0.3">31000</text><text x="799.05" y="339.6" font-size="13.89" text-anchor="middle" letter-spacing="-0.3">32000</text><text x="904.25" y="339.6" font-size="13.89" text-anchor="middle" letter-spacing="-0.3">33000</text><text x="1009.45" y="339.6" font-size="13.89" text-anchor="middle" letter-spacing="-0.3">34000</text><text x="1114.65" y="339.6" font-size="13.89" text-anchor="middle" letter-spacing="-0.3">35000</text><text x="1219.85" y="339.6" font-size="13.89" text-anchor="middle" letter-spacing="-0.3">36000</text><text x="666" y="121.6" font-size="13.89" text-anchor="end" letter-spacing="-0.3">24</text><text x="666" y="156.82" font-size="13.89" text-anchor="end" letter-spacing="-0.3">22</text><text x="666" y="192.04" font-size="13.89" text-anchor="end" letter-spacing="-0.3">20</text><text x="666" y="227.26" font-size="13.89" text-anchor="end" letter-spacing="-0.3">18</text><text x="666" y="262.48" font-size="13.89" text-anchor="end" letter-spacing="-0.3">16</text><text x="666" y="297.7" font-size="13.89" text-anchor="end" letter-spacing="-0.3">14</text><text x="976.5" y="360.2" font-size="13.89" text-anchor="middle">Point Kilométrique (m)</text><text transform="translate(639.5 205.05) rotate(-90)" font-size="13.89" text-anchor="middle">Profondeur (m)</text></svg><svg class="abs" style="left:285px;top:416px;background:#fff" width="995" height="282" viewBox="285 416 995 282"><path d="M379.5 420 V651.5 M500.5 420 V651.5 M622.5 420 V651.5 M743.5 420 V651.5 M864.5 420 V651.5 M985.5 420 V651.5 M1107.5 420 V651.5 M1228.5 420 V651.5 M336.5 431.5 H1277 M336.5 479.5 H1277 M336.5 528.5 H1277 M336.5 576.5 H1277 M336.5 625.5 H1277 " stroke="#808080" stroke-width="0.72" stroke-dasharray="2.57 1.11" fill="none"/><path d="M379.65 431.3 L379.65 445.86 L500.9 591.42 L500.9 639.94 L591.6 639.94 L898.6 625.38 L898.6 576.86 L1052.83 488.07 L1084.36 469.15 L1233.25 431.3" stroke="#000" stroke-width="2.08" stroke-dasharray="7.7 3.33" fill="none"/><path d="M405.35 431.3 L405.35 485.64 L500.9 591.42 L500.9 639.94 L591.6 639.94 L898.6 625.38 L898.6 576.86 L1052.83 485.64 L1052.83 431.3" stroke="#0000ff" stroke-width="2.08" stroke-linecap="square" fill="none"/><path d="M405.35 431.3 L405.35 485.64 L500.9 591.42 L500.9 639.94 L591.6 639.94 L898.6 625.38 L898.6 576.86 L1052.83 485.64 L1052.83 431.3" stroke="#800080" stroke-width="2.08" stroke-dasharray="7.7 3.33" fill="none"/><text x="501.2" y="602.7" font-size="13.89" fill="#1f77b4">rg</text><text x="899.9" y="588.3" font-size="13.89" fill="#ff7f0e">rd</text><path d="M336.5 420 V651.5 M335.95 651.5 H1277 M379.5 651.5 v4.86 M500.5 651.5 v4.86 M622.5 651.5 v4.86 M743.5 651.5 v4.86 M864.5 651.5 v4.86 M985.5 651.5 v4.86 M1107.5 651.5 v4.86 M1228.5 651.5 v4.86 M336.5 431.5 h-4.86 M336.5 479.5 h-4.86 M336.5 528.5 h-4.86 M336.5 576.5 h-4.86 M336.5 625.5 h-4.86 " stroke="#000" stroke-width="1.1" fill="none"/><text x="378.95" y="671" font-size="13.89" text-anchor="middle" letter-spacing="-0.3">−2.5</text><text x="500.2" y="671" font-size="13.89" text-anchor="middle" letter-spacing="-0.3">0.0</text><text x="621.45" y="671" font-size="13.89" text-anchor="middle" letter-spacing="-0.3">2.5</text><text x="742.7" y="671" font-size="13.89" text-anchor="middle" letter-spacing="-0.3">5.0</text><text x="863.95" y="671" font-size="13.89" text-anchor="middle" letter-spacing="-0.3">7.5</text><text x="985.2" y="671" font-size="13.89" text-anchor="middle" letter-spacing="-0.3">10.0</text><text x="1106.45" y="671" font-size="13.89" text-anchor="middle" letter-spacing="-0.3">12.5</text><text x="1227.7" y="671" font-size="13.89" text-anchor="middle" letter-spacing="-0.3">15.0</text><text x="326" y="437.1" font-size="13.89" text-anchor="end" letter-spacing="-0.3">23</text><text x="326" y="485.62" font-size="13.89" text-anchor="end" letter-spacing="-0.3">22</text><text x="326" y="534.14" font-size="13.89" text-anchor="end" letter-spacing="-0.3">21</text><text x="326" y="582.66" font-size="13.89" text-anchor="end" letter-spacing="-0.3">20</text><text x="326" y="631.18" font-size="13.89" text-anchor="end" letter-spacing="-0.3">19</text><text x="805.95" y="691.4" font-size="13.89" text-anchor="middle">Abscisse en travers (m)</text><text transform="translate(299.5 535.75) rotate(-90)" font-size="13.89" text-anchor="middle">Cote (m)</text><rect x="1064.7" y="597" width="208.4" height="51.2" rx="2.8" fill="#848484"/><rect x="1061.9" y="594.2" width="208.4" height="51.2" rx="2.8" fill="#fff" stroke="#cccccc" stroke-width="1.1"/><path d="M1064.6 603.6 H1088.7" stroke="#000" stroke-width="2.08" stroke-dasharray="7.7 3.33"/><path d="M1064.6 619.2 H1088.7" stroke="#0000ff" stroke-width="2.08"/><path d="M1064.6 634.8 H1086" stroke="#800080" stroke-width="2.08" stroke-dasharray="7.7 3.33"/><text x="1096.4" y="606.8" font-size="11.11">Section en travers précédente</text><text x="1096.4" y="623.1" font-size="11.11">Section en travers</text><text x="1096.4" y="638.7" font-size="11.11">Section en travers suivante</text></svg><svg class="abs" style="left:1279px;top:416px" width="1" height="282" viewBox="1279 416 1 282"><rect x="1279" y="429" width="1" height="1" fill="#555"/><rect x="1279" y="448" width="1" height="1" fill="#999"/><rect x="1279" y="450" width="1" height="1" fill="#444"/><rect x="1279" y="457" width="1" height="1" fill="#fdd"/><rect x="1279" y="458" width="1" height="1" fill="#fcc"/><rect x="1279" y="460" width="1" height="1" fill="#f88"/><rect x="1279" y="461" width="1" height="1" fill="#faa"/><rect x="1279" y="463" width="1" height="1" fill="#fcc"/><rect x="1279" y="464" width="1" height="1" fill="#fbb"/><rect x="1279" y="466" width="1" height="1" fill="#f00"/><rect x="1279" y="467" width="1" height="1" fill="#f20"/><rect x="1279" y="469" width="1" height="1" fill="#fcc"/><rect x="1279" y="472" width="1" height="1" fill="#edd"/><rect x="1279" y="473" width="1" height="1" fill="#ecc"/><rect x="1279" y="474" width="1" height="1" fill="#e00"/><rect x="1279" y="475" width="1" height="1" fill="#f00"/><rect x="1279" y="478" width="1" height="1" fill="#fdb"/><rect x="1279" y="479" width="1" height="1" fill="#fc9"/><rect x="1279" y="480" width="1" height="1" fill="#fc9"/><rect x="1279" y="481" width="1" height="1" fill="#fdb"/><rect x="1279" y="487" width="1" height="1" fill="#fbb"/><rect x="1279" y="489" width="1" height="1" fill="#1f77b4"/><rect x="1279" y="491" width="1" height="1" fill="#f00"/><rect x="1279" y="493" width="1" height="1" fill="#f00"/><rect x="1279" y="499" width="1" height="1" fill="#fdd"/><rect x="1279" y="501" width="1" height="1" fill="#fbb"/><rect x="1279" y="507" width="1" height="1" fill="#f00"/><rect x="1279" y="509" width="1" height="1" fill="#fdd"/><rect x="1279" y="511" width="1" height="1" fill="#fdd"/><rect x="1279" y="516" width="1" height="1" fill="#777"/><rect x="1279" y="518" width="1" height="1" fill="#fdd"/><rect x="1279" y="529" width="1" height="1" fill="#888"/><rect x="1279" y="542" width="1" height="1" fill="#ccc"/><rect x="1279" y="552" width="1" height="1" fill="#888"/><rect x="1279" y="576" width="1" height="1" fill="#111"/><rect x="1279" y="577" width="1" height="1" fill="#333"/></svg><svg class="abs" style="left:0;top:0;pointer-events:none" width="1280" height="720"><rect x="776" y="368" width="1" height="1" fill="#a6a6a6"/><rect x="777" y="369" width="1" height="1" fill="#fbfbfb"/><rect x="623" y="196" width="1" height="1" fill="#a6a6a6"/><rect x="624" y="197" width="1" height="1" fill="#fbfbfb"/><rect x="283" y="362" width="1" height="1" fill="#a6a6a6"/><rect x="284" y="363" width="1" height="1" fill="#fbfbfb"/><rect x="779" y="368" width="1" height="1" fill="#a6a6a6"/><rect x="780" y="369" width="1" height="1" fill="#fbfbfb"/><rect x="623" y="199" width="1" height="1" fill="#a6a6a6"/><rect x="624" y="200" width="1" height="1" fill="#fbfbfb"/><rect x="283" y="365" width="1" height="1" fill="#a6a6a6"/><rect x="284" y="366" width="1" height="1" fill="#fbfbfb"/><rect x="782" y="368" width="1" height="1" fill="#a6a6a6"/><rect x="783" y="369" width="1" height="1" fill="#fbfbfb"/><rect x="623" y="202" width="1" height="1" fill="#a6a6a6"/><rect x="624" y="203" width="1" height="1" fill="#fbfbfb"/><rect x="283" y="368" width="1" height="1" fill="#a6a6a6"/><rect x="284" y="369" width="1" height="1" fill="#fbfbfb"/><rect x="785" y="368" width="1" height="1" fill="#a6a6a6"/><rect x="786" y="369" width="1" height="1" fill="#fbfbfb"/><rect x="623" y="205" width="1" height="1" fill="#a6a6a6"/><rect x="624" y="206" width="1" height="1" fill="#fbfbfb"/><rect x="283" y="371" width="1" height="1" fill="#a6a6a6"/><rect x="284" y="372" width="1" height="1" fill="#fbfbfb"/><rect x="788" y="368" width="1" height="1" fill="#a6a6a6"/><rect x="789" y="369" width="1" height="1" fill="#fbfbfb"/><rect x="623" y="208" width="1" height="1" fill="#a6a6a6"/><rect x="624" y="209" width="1" height="1" fill="#fbfbfb"/><rect x="283" y="374" width="1" height="1" fill="#a6a6a6"/><rect x="284" y="375" width="1" height="1" fill="#fbfbfb"/><rect x="791" y="368" width="1" height="1" fill="#a6a6a6"/><rect x="792" y="369" width="1" height="1" fill="#fbfbfb"/><rect x="623" y="211" width="1" height="1" fill="#a6a6a6"/><rect x="624" y="212" width="1" height="1" fill="#fbfbfb"/><rect x="283" y="377" width="1" height="1" fill="#a6a6a6"/><rect x="284" y="378" width="1" height="1" fill="#fbfbfb"/><rect x="1277" y="717" width="1" height="1" fill="#a4a4a4"/><rect x="1278" y="718" width="1" height="1" fill="#fbfbfb"/><rect x="1274" y="717" width="1" height="1" fill="#a4a4a4"/><rect x="1275" y="718" width="1" height="1" fill="#fbfbfb"/><rect x="1271" y="717" width="1" height="1" fill="#a4a4a4"/><rect x="1272" y="718" width="1" height="1" fill="#fbfbfb"/><rect x="1268" y="717" width="1" height="1" fill="#a4a4a4"/><rect x="1269" y="718" width="1" height="1" fill="#fbfbfb"/><rect x="1277" y="714" width="1" height="1" fill="#a4a4a4"/><rect x="1278" y="715" width="1" height="1" fill="#fbfbfb"/><rect x="1274" y="714" width="1" height="1" fill="#a4a4a4"/><rect x="1275" y="715" width="1" height="1" fill="#fbfbfb"/><rect x="1271" y="714" width="1" height="1" fill="#a4a4a4"/><rect x="1272" y="715" width="1" height="1" fill="#fbfbfb"/><rect x="1277" y="711" width="1" height="1" fill="#a4a4a4"/><rect x="1278" y="712" width="1" height="1" fill="#fbfbfb"/><rect x="1274" y="711" width="1" height="1" fill="#a4a4a4"/><rect x="1275" y="712" width="1" height="1" fill="#fbfbfb"/><rect x="1277" y="708" width="1" height="1" fill="#a4a4a4"/><rect x="1278" y="709" width="1" height="1" fill="#fbfbfb"/></svg></body></html>
